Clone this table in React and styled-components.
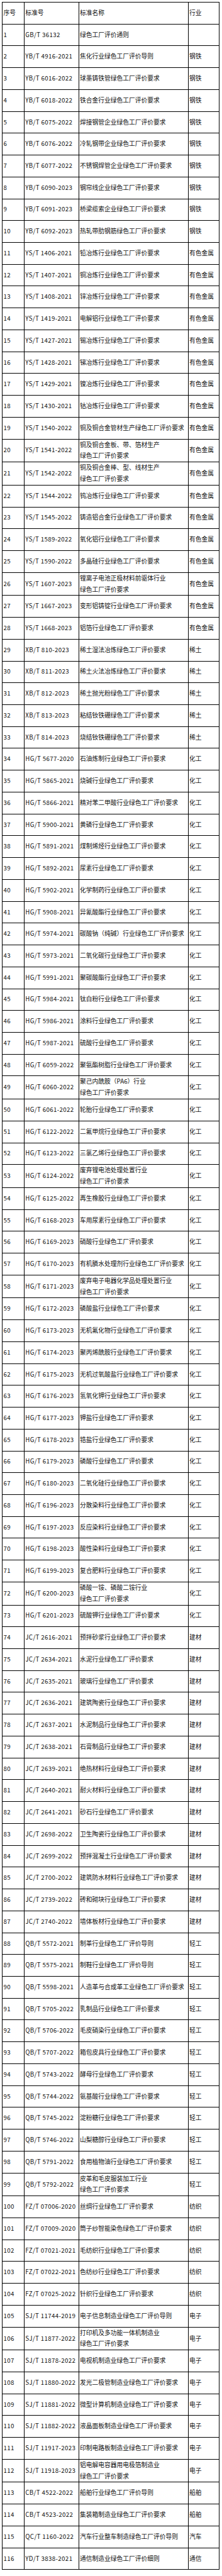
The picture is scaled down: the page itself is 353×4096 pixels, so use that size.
import React from "react";
import styled, { createGlobalStyle } from "styled-components";

const REQ = "绿色工厂评价要求";

// industry groups, rows are [standard number, name]; "\n" marks a forced line break
const groups = [
  { trade: "", rows: [["GB/T 36132", "绿色工厂评价通则"]] },
  {
    trade: "钢铁",
    rows: [
      ["YB/T 4916-2021", "焦化行业绿色工厂评价导则"],
      ["YB/T 6016-2022", "球墨铸铁管" + REQ],
      ["YB/T 6018-2022", "铁合金行业" + REQ],
      ["YB/T 6075-2022", "焊接钢管企业" + REQ],
      ["YB/T 6076-2022", "冷轧钢带企业" + REQ],
      ["YB/T 6077-2022", "不锈钢焊管企业" + REQ],
      ["YB/T 6090-2023", "钢帘线企业" + REQ],
      ["YB/T 6091-2023", "桥梁缆索企业" + REQ],
      ["YB/T 6092-2023", "热轧带肋钢筋" + REQ],
    ],
  },
  {
    trade: "有色金属",
    rows: [
      ["YS/T 1406-2021", "铅冶炼行业" + REQ],
      ["YS/T 1407-2021", "铜冶炼行业" + REQ],
      ["YS/T 1408-2021", "锌冶炼行业" + REQ],
      ["YS/T 1419-2021", "电解铝行业" + REQ],
      ["YS/T 1427-2021", "锡冶炼行业" + REQ],
      ["YS/T 1428-2021", "锑冶炼行业" + REQ],
      ["YS/T 1429-2021", "镍冶炼行业" + REQ],
      ["YS/T 1430-2021", "钴冶炼行业" + REQ],
      ["YS/T 1540-2022", "铜及铜合金管材生产" + REQ],
      ["YS/T 1541-2022", "铜及铜合金板、带、箔材生产\n" + REQ],
      ["YS/T 1542-2022", "铜及铜合金棒、型、线材生产\n" + REQ],
      ["YS/T 1544-2022", "钨冶炼行业" + REQ],
      ["YS/T 1545-2022", "铸造铝合金行业" + REQ],
      ["YS/T 1589-2022", "氧化铝行业" + REQ],
      ["YS/T 1590-2022", "多晶硅行业" + REQ],
      ["YS/T 1607-2023", "锂离子电池正极材料前驱体行业\n" + REQ],
      ["YS/T 1667-2023", "变形铝铸锭行业" + REQ],
      ["YS/T 1668-2023", "铝箔行业" + REQ],
    ],
  },
  {
    trade: "稀土",
    rows: [
      ["XB/T 810-2023", "稀土湿法冶炼" + REQ],
      ["XB/T 811-2023", "稀土火法冶炼" + REQ],
      ["XB/T 812-2023", "稀土抛光粉" + REQ],
      ["XB/T 813-2023", "粘结钕铁硼" + REQ],
      ["XB/T 814-2023", "烧结钕铁硼" + REQ],
    ],
  },
  {
    trade: "化工",
    rows: [
      ["HG/T 5677-2020", "石油炼制行业" + REQ],
      ["HG/T 5865-2021", "烧碱行业" + REQ],
      ["HG/T 5866-2021", "精对苯二甲酸行业" + REQ],
      ["HG/T 5900-2021", "黄磷行业" + REQ],
      ["HG/T 5891-2021", "煤制烯烃行业" + REQ],
      ["HG/T 5892-2021", "尿素行业" + REQ],
      ["HG/T 5902-2021", "化学制药行业" + REQ],
      ["HG/T 5908-2021", "异氰酸酯行业" + REQ],
      ["HG/T 5974-2021", "碳酸钠（纯碱）行业" + REQ],
      ["HG/T 5973-2021", "二氧化碳行业" + REQ],
      ["HG/T 5991-2021", "聚碳酸酯行业" + REQ],
      ["HG/T 5984-2021", "钛白粉行业" + REQ],
      ["HG/T 5986-2021", "涂料行业" + REQ],
      ["HG/T 5987-2021", "硫酸行业" + REQ],
      ["HG/T 6059-2022", "聚氨酯树脂行业" + REQ],
      ["HG/T 6060-2022", "聚己内酰胺（PA6）行业\n" + REQ],
      ["HG/T 6061-2022", "轮胎行业" + REQ],
      ["HG/T 6122-2022", "二氟甲烷行业" + REQ],
      ["HG/T 6123-2022", "三氯乙烯行业" + REQ],
      ["HG/T 6124-2022", "废弃锂电池处理处置行业\n" + REQ],
      ["HG/T 6125-2022", "再生橡胶行业" + REQ],
      ["HG/T 6168-2023", "车用尿素行业" + REQ],
      ["HG/T 6169-2023", "硝酸行业" + REQ],
      ["HG/T 6170-2023", "有机膦水处理剂行业" + REQ],
      ["HG/T 6171-2023", "废弃电子电器化学品处理处置行业\n" + REQ],
      ["HG/T 6172-2023", "磷酸盐行业" + REQ],
      ["HG/T 6173-2023", "无机氟化物行业" + REQ],
      ["HG/T 6174-2023", "聚丙烯酰胺行业" + REQ],
      ["HG/T 6175-2023", "无机过氧酸盐行业" + REQ],
      ["HG/T 6176-2023", "氢氧化钾行业" + REQ],
      ["HG/T 6177-2023", "钾盐行业" + REQ],
      ["HG/T 6178-2023", "锆盐行业" + REQ],
      ["HG/T 6179-2023", "磷酸行业" + REQ],
      ["HG/T 6180-2023", "二氧化硅行业" + REQ],
      ["HG/T 6196-2023", "分散染料行业" + REQ],
      ["HG/T 6197-2023", "反应染料行业" + REQ],
      ["HG/T 6198-2023", "酸性染料行业" + REQ],
      ["HG/T 6199-2023", "复合肥料行业" + REQ],
      ["HG/T 6200-2023", "磷酸一铵、磷酸二铵行业\n" + REQ],
      ["HG/T 6201-2023", "硫酸钾行业" + REQ],
    ],
  },
  {
    trade: "建材",
    rows: [
      ["JC/T 2616-2021", "预拌砂浆行业" + REQ],
      ["JC/T 2634-2021", "水泥行业" + REQ],
      ["JC/T 2635-2021", "玻璃行业" + REQ],
      ["JC/T 2636-2021", "建筑陶瓷行业" + REQ],
      ["JC/T 2637-2021", "水泥制品行业" + REQ],
      ["JC/T 2638-2021", "石膏制品行业" + REQ],
      ["JC/T 2639-2021", "绝热材料行业" + REQ],
      ["JC/T 2640-2021", "耐火材料行业" + REQ],
      ["JC/T 2641-2021", "砂石行业" + REQ],
      ["JC/T 2698-2022", "卫生陶瓷行业" + REQ],
      ["JC/T 2699-2022", "预拌混凝土行业" + REQ],
      ["JC/T 2700-2022", "建筑防水材料行业" + REQ],
      ["JC/T 2739-2022", "砖和砌块行业" + REQ],
      ["JC/T 2740-2022", "墙体板材行业" + REQ],
    ],
  },
  {
    trade: "轻工",
    rows: [
      ["QB/T 5572-2021", "制革行业绿色工厂评价导则"],
      ["QB/T 5575-2021", "制鞋行业绿色工厂评价导则"],
      ["QB/T 5598-2021", "人造革与合成革工业" + REQ],
      ["QB/T 5705-2022", "乳制品行业" + REQ],
      ["QB/T 5706-2022", "毛皮硝染行业" + REQ],
      ["QB/T 5707-2022", "箱包皮具行业" + REQ],
      ["QB/T 5743-2022", "酵母行业" + REQ],
      ["QB/T 5744-2022", "氨基酸行业" + REQ],
      ["QB/T 5745-2022", "淀粉糖行业" + REQ],
      ["QB/T 5746-2022", "山梨糖醇行业" + REQ],
      ["QB/T 5791-2022", "食用植物油行业" + REQ],
      ["QB/T 5792-2022", "皮革和毛皮服装加工行业\n" + REQ],
    ],
  },
  {
    trade: "纺织",
    rows: [
      ["FZ/T 07006-2020", "丝绸行业" + REQ],
      ["FZ/T 07009-2020", "筒子纱智能染色" + REQ],
      ["FZ/T 07021-2021", "毛纺织行业" + REQ],
      ["FZ/T 07022-2021", "色纺纱行业" + REQ],
      ["FZ/T 07025-2022", "针织行业" + REQ],
    ],
  },
  {
    trade: "电子",
    rows: [
      ["SJ/T 11744-2019", "电子信息制造业绿色工厂评价导则"],
      ["SJ/T 11877-2022", "打印机及多功能一体机制造业\n" + REQ],
      ["SJ/T 11878-2022", "电视机制造业" + REQ],
      ["SJ/T 11880-2022", "发光二极管制造业" + REQ],
      ["SJ/T 11881-2022", "微型计算机制造业" + REQ],
      ["SJ/T 11882-2022", "液晶面板制造业" + REQ],
      ["SJ/T 11917-2023", "印制电路板制造业" + REQ],
      ["SJ/T 11918-2023", "铝电解电容器用电极箔制造业\n" + REQ],
    ],
  },
  {
    trade: "船舶",
    rows: [
      ["CB/T 4522-2022", "船舶行业绿色工厂评价导则"],
      ["CB/T 4523-2022", "集装箱制造业" + REQ],
    ],
  },
  { trade: "汽车", rows: [["QC/T 1160-2022", "汽车行业整车制造绿色工厂评价导则"]] },
  { trade: "通信", rows: [["YD/T 3838-2021", "通信制造业绿色工厂评价细则"]] },
];

const rows = groups.flatMap((g) => g.rows.map(([code, name]) => ({ code, name, trade: g.trade })));

export default function App() {
  return (
    <>
      <GlobalStyle />
      <Sheet>
        <Row>
          <Cell>序号</Cell>
          <Cell>标准号</Cell>
          <Cell>标准名称</Cell>
          <Cell>行业</Cell>
        </Row>
        {rows.map((r, i) => (
          <Row key={r.code}>
            <Cell $latin>{i + 1}</Cell>
            <Cell $latin>{r.code}</Cell>
            <Cell>{r.name}</Cell>
            <Cell>{r.trade}</Cell>
          </Row>
        ))}
      </Sheet>
    </>
  );
}

const GlobalStyle = createGlobalStyle`
  html, body {
    margin: 0;
    padding: 0;
    background: #fff;
  }
  * {
    box-sizing: border-box;
  }
`;

const Sheet = styled.div`
  width: 345.4px;
  margin: 2.9px 0 0 3.4px;
  border-top: 1px solid #000;
  border-left: 1px solid #000;
  font-family: "Noto Sans CJK SC", "Microsoft YaHei", sans-serif;
  font-size: 9.76px;
  color: #111;
`;

const Row = styled.div`
  display: grid;
  grid-template-columns: 34.9px 86.8px 173.9px 48.8px;
  min-height: 34.74px;
`;

const Cell = styled.div`
  display: flex;
  align-items: center;
  padding: 0 0 0 1px;
  border-right: 1px solid #000;
  border-bottom: 1px solid #000;
  line-height: 17.8px;
  letter-spacing: ${(p) => (p.$latin ? "0.35px" : "0")};
  white-space: pre;
  overflow: hidden;
`;
